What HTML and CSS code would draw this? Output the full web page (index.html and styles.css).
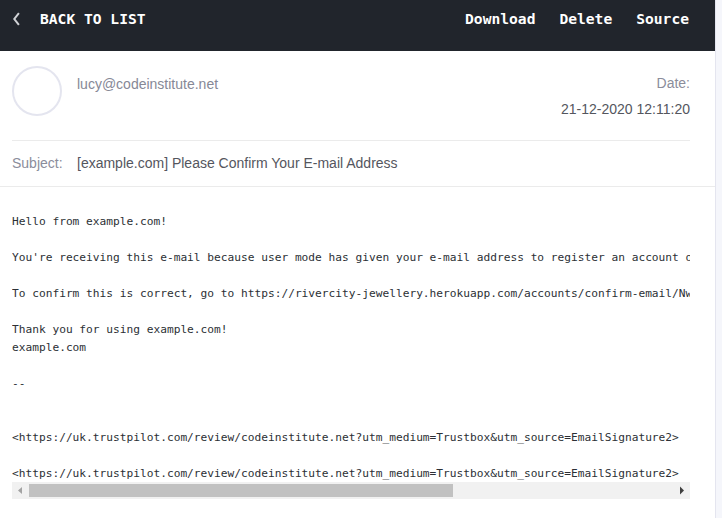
FILE: index.html
```html
<!DOCTYPE html>
<html lang="en">
<head>
<meta charset="utf-8">
<title>Message</title>
<link rel="stylesheet" href="styles.css">
</head>
<body>
<main class="panel">
  <header class="toolbar">
    <a class="back"><svg class="chevron" width="8" height="14" viewBox="0 0 8 14"><path d="M6.900 1.200 2.300 7l4.600 5.800" fill="none" stroke="#d0d2d6" stroke-width="2"/></svg><span class="label">BACK TO LIST</span></a>
    <nav class="actions"><a>Download</a><a>Delete</a><a>Source</a></nav>
  </header>
  <section class="sender">
    <div class="avatar"></div>
    <div class="email"><span>lucy@codeinstitute.net</span></div>
    <div class="date"><div class="muted">Date:</div><div><span>21-12-2020 12:11:20</span></div></div>
  </section>
  <section class="subject"><span class="subject-label">Subject:</span><span class="subject-text">[example.com] Please Confirm Your E-mail Address</span></section>
  <section class="message">
<pre class="text">Hello from example.com!

You're receiving this e-mail because user mode has given your e-mail address to register an account o

To confirm this is correct, go to https://rivercity-jewellery.herokuapp.com/accounts/confirm-email/Nw

Thank you for using example.com!
example.com

--


&lt;https://uk.trustpilot.com/review/codeinstitute.net?utm_medium=Trustbox&amp;utm_source=EmailSignature2&gt;

&lt;https://uk.trustpilot.com/review/codeinstitute.net?utm_medium=Trustbox&amp;utm_source=EmailSignature2&gt;</pre>
    <div class="scrollbar">
      <svg class="arrow" width="17" height="17" viewBox="0 0 17 17"><path d="M10 5v7L6 8.500z" fill="#a3a3a3"/></svg>
      <div class="thumb"></div>
      <svg class="arrow" width="17" height="17" viewBox="0 0 17 17"><path d="M7 4.500v8l4-4z" fill="#404040"/></svg>
    </div>
  </section>
</main>
</body>
</html>
```
FILE: styles.css
```css
* { box-sizing: border-box; }
body {
  margin: 0;
  height: 518px;
  overflow: hidden;
  background: #f5f6fb;
  font-family: "Liberation Sans", Arial, sans-serif;
  font-size: 14px;
  color: #54565e;
}
.panel {
  width: 716px;
  height: 518px;
  background: #fff;
  border-right: 1px solid #e4e5ef;
}
.toolbar {
  display: flex;
  justify-content: space-between;
  height: 51px;
  padding: 9px 26px 0 12px;
  background: #21252c;
  color: #fff;
  font: bold 14.62px/20px "DejaVu Sans Mono", monospace;
}
.back { display: flex; }
.chevron { margin: 3px 20px 0 0; }
.actions { display: flex; gap: 24px; }
.sender {
  display: flex;
  height: 90px;
  margin: 0 25px 0 12px;
  padding-top: 15px;
  border-bottom: 1px solid #ebebeb;
}
.avatar {
  width: 50px;
  height: 50px;
  border: 2px solid #e4e5ef;
  border-radius: 50%;
}
.email { margin: 5px 0 0 15px; line-height: 26px; color: #868896; }
.date { margin: 4px 0 0 auto; text-align: right; line-height: 26px; }
.muted { color: #8b8d9b; }
.subject {
  display: flex;
  height: 46px;
  padding: 0 25px 0 12px;
  line-height: 44px;
  border-bottom: 1px solid #ebebeb;
}
.subject-label { width: 65px; color: #8b8d9b; }
.message { padding: 26px 25px 0 12px; }
.text {
  margin: 0;
  overflow: hidden;
  font: 11.19px/18px "DejaVu Sans Mono", monospace;
  color: #2c3035;
}
.scrollbar {
  display: flex;
  align-items: center;
  height: 17px;
  margin-top: -1px;
  background: #f1f1f1;
}
.arrow { flex: none; }
.thumb {
  width: 424px;
  height: 13px;
  margin-right: auto;
  background: #c1c1c1;
}
```
